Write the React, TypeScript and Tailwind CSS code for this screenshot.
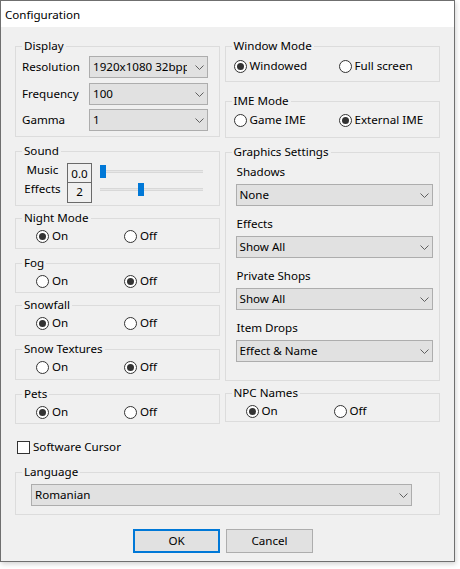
import React from 'react';

function Chevron() {
  return (
    <svg width="9" height="5" viewBox="0 0 9 5" className="shrink-0">
      <path d="M0.5 0.5 L4.5 4.5 L8.5 0.5" fill="none" stroke="#5f5f5f" strokeWidth="1" />
    </svg>
  );
}

function Select({ value, className = '' }: { value: string; className?: string }) {
  return (
    <div className={`flex items-center h-[22px] border border-[#adadad] bg-[#e1e1e1] ${className}`}>
      <span className="flex-1 min-w-0 pl-[3px] overflow-hidden whitespace-nowrap leading-[16px]">{value}</span>
      <span className="w-[20px] flex justify-end pr-[3px]">
        <Chevron />
      </span>
    </div>
  );
}

function Radio({ checked, label, className = '' }: { checked?: boolean; label: string; className?: string }) {
  return (
    <span className={`flex items-center gap-[3px] h-[16px] ${className}`}>
      <span className="w-[13px] h-[13px] rounded-full border border-[#333] bg-white flex items-center justify-center shrink-0">
        {checked && <span className="w-[7px] h-[7px] rounded-full bg-[#333]" />}
      </span>
      <span className="leading-[16px]">{label}</span>
    </span>
  );
}

function Group({ title, className = '', children }: { title: string; className?: string; children?: React.ReactNode }) {
  return (
    <fieldset className={`border border-[#dcdcdc] ${className}`}>
      <legend className="ml-[6px] px-[2px] leading-[16px]">{title}</legend>
      {children}
    </fieldset>
  );
}

function OnOff({ on, title, className }: { on: boolean; title: string; className: string }) {
  return (
    <Group title={title} className={className}>
      <div className="flex mt-[2px] pl-[20px]">
        <Radio checked={on} label="On" className="w-[88px]" />
        <Radio checked={!on} label="Off" />
      </div>
    </Group>
  );
}

function Slider({ pos, className = '' }: { pos: number; className?: string }) {
  return (
    <div className={`relative w-[103px] h-[13px] ${className}`}>
      <div className="absolute left-0 right-0 top-[5px] h-[3px] bg-[#e7e7e7] border-y border-[#d8d8d8]" />
      <div className="absolute top-0 w-[6px] h-[13px] bg-[#0078d7]" style={{ left: pos }} />
    </div>
  );
}

export default function App() {
  return (
    <div className="w-[460px] h-[569px] bg-white font-['Noto_Sans',sans-serif] text-[11.6px] text-black">
      <div className="w-[455px] h-[562px] border border-[#6f6f6f] bg-[#f0f0f0] flex flex-col shadow-[1px_2px_5px_rgba(0,0,0,0.18)]">
        {/* Title bar */}
        <div className="h-[26px] bg-white flex items-center pl-[4px] pt-[1px] leading-[16px]">Configuration</div>

        <div className="px-[14px] pt-[11px] flex flex-col">
          <div className="flex gap-[5px]">
            {/* Left column */}
            <div className="w-[205px] flex flex-col">
              <Group title="Display" className="h-[99px]">
                <div className="flex flex-col pl-[6px] mt-[2px]">
                  <div className="flex items-center h-[22px]">
                    <span className="w-[67px]">Resolution</span>
                    <Select value="1920x1080 32bpp" className="w-[119px]" />
                  </div>
                  <div className="flex items-center h-[22px] mt-[5px]">
                    <span className="w-[67px]">Frequency</span>
                    <Select value="100" className="w-[119px]" />
                  </div>
                  <div className="flex items-center h-[22px] mt-[4px]">
                    <span className="w-[67px]">Gamma</span>
                    <Select value="1" className="w-[119px]" />
                  </div>
                </div>
              </Group>

              <Group title="Sound" className="h-[63px] mt-[6px]">
                <div className="flex flex-col pl-[6px] mt-[4px]">
                  <div className="flex items-start h-[20px]">
                    <span className="w-[41px] text-center leading-[16px] -mt-[1px]">Music</span>
                    <span className="ml-[4px] w-[25px] h-[20px] border border-[#6a6a6a] text-center leading-[16px] pt-[2px]">0.0</span>
                    <Slider pos={0} className="ml-[8px] mt-[2px]" />
                  </div>
                  <div className="flex items-start h-[20px]">
                    <span className="w-[41px] text-center leading-[16px] -mt-[2px]">Effects</span>
                    <span className="ml-[4px] w-[25px] h-[20px] border-x border-b border-[#6a6a6a] text-center leading-[16px] pt-[1px]">2</span>
                    <Slider pos={38} className="ml-[8px]" />
                  </div>
                </div>
              </Group>

              <OnOff title="Night Mode" on={true} className="h-[39px] mt-[4px]" />
              <OnOff title="Fog" on={false} className="h-[38px] mt-[6px]" />
              <OnOff title="Snowfall" on={true} className="h-[39px] mt-[4px]" />
              <OnOff title="Snow Textures" on={false} className="h-[39px] mt-[5px]" />
              <OnOff title="Pets" on={true} className="h-[38px] mt-[6px]" />
            </div>

            {/* Right column */}
            <div className="w-[216px] flex flex-col">
              <Group title="Window Mode" className="h-[44px]">
                <div className="flex mt-[4px] pl-[8px]">
                  <Radio checked label="Windowed" className="w-[105px]" />
                  <Radio label="Full screen" />
                </div>
              </Group>

              <Group title="IME Mode" className="h-[45px] mt-[11px]">
                <div className="flex mt-[3px] pl-[8px]">
                  <Radio label="Game IME" className="w-[105px]" />
                  <Radio checked label="External IME" />
                </div>
              </Group>

              <Group title="Graphics Settings" className="h-[237px] mt-[6px]">
                <div className="flex flex-col pl-[10px] mt-[4px]">
                  <span className="leading-[16px] pl-[1px]">Shadows</span>
                  <Select value="None" className="w-[197px] mt-[4px]" />
                  <span className="leading-[16px] pl-[1px] mt-[10px]">Effects</span>
                  <Select value="Show All" className="w-[197px] mt-[4px]" />
                  <span className="leading-[16px] pl-[1px] mt-[10px]">Private Shops</span>
                  <Select value="Show All" className="w-[197px] mt-[4px]" />
                  <span className="leading-[16px] pl-[1px] mt-[10px]">Item Drops</span>
                  <Select value="Effect & Name" className="w-[197px] mt-[4px]" />
                </div>
              </Group>

              <Group title="NPC Names" className="h-[37px] mt-[4px]">
                <div className="flex mt-[2px] pl-[20px]">
                  <Radio checked label="On" className="w-[88px]" />
                  <Radio label="Off" />
                </div>
              </Group>
            </div>
          </div>

          {/* Software cursor */}
          <div className="flex items-center h-[16px] mt-[15px] ml-[2px] gap-[3px]">
            <span className="w-[13px] h-[13px] border border-[#333] bg-white" />
            <span className="leading-[16px]">Software Cursor</span>
          </div>

          <Group title="Language" className="h-[51px] mt-[9px]">
            <div className="pl-[15px] mt-[4px]">
              <Select value="Romanian" className="w-[381px]" />
            </div>
          </Group>

          <div className="flex gap-[6px] mt-[14px] ml-[118px]">
            <button className="w-[87px] h-[24px] border-2 border-[#0078d7] bg-[#e1e1e1] leading-[16px]">OK</button>
            <button className="w-[87px] h-[24px] border border-[#adadad] bg-[#e1e1e1] leading-[16px]">Cancel</button>
          </div>
        </div>
      </div>
    </div>
  );
}
